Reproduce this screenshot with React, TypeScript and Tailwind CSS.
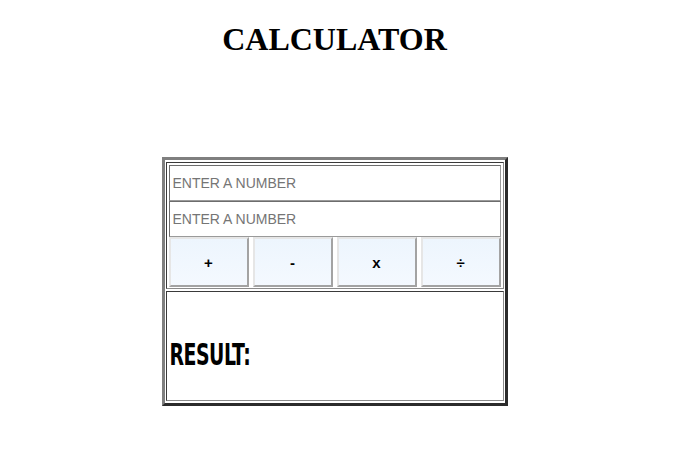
import React, { useState } from 'react';

const ops = ['+', '-', 'x', '÷'];

const App: React.FC = () => {
  const [a, setA] = useState('');
  const [b, setB] = useState('');
  const [result, setResult] = useState<string>('');

  const calc = (op: string) => {
    const x = parseFloat(a);
    const y = parseFloat(b);
    if (isNaN(x) || isNaN(y)) return;
    let r = 0;
    if (op === '+') r = x + y;
    else if (op === '-') r = x - y;
    else if (op === 'x') r = x * y;
    else r = x / y;
    setResult(String(r));
  };

  return (
    <div className="min-h-[475px] w-[669px] bg-white">
      <h1 className="mt-[21px] text-center font-['Liberation_Serif',serif] text-[32px] font-bold leading-[1.15] text-black">
        CALCULATOR
      </h1>

      <div className="mx-auto mt-[99px] flex w-[346px] flex-col gap-[2px] border-[3px] border-t-[#7f7f7f] border-l-[#7f7f7f] border-r-[#2b2b2b] border-b-[#2b2b2b] px-px py-[2px]">
        <div className="border border-t-[#3a3a3a] border-l-[#3a3a3a] border-r-[#8a8a8a] border-b-[#8a8a8a] px-[2px] pt-[2px] pb-px">
          <input
            value={a}
            onChange={(e) => setA(e.target.value)}
            placeholder="ENTER A NUMBER"
            className="block h-[36px] w-full border border-t-[#6d6d6d] border-l-[#6d6d6d] border-r-[#9a9a9a] border-b-[#9a9a9a] px-[3px] font-['Liberation_Sans',sans-serif] text-[14px] text-black outline-none placeholder:text-[#757575]"
          />
          <input
            value={b}
            onChange={(e) => setB(e.target.value)}
            placeholder="ENTER A NUMBER"
            className="block h-[36px] w-full border border-t-[#6d6d6d] border-l-[#6d6d6d] border-r-[#9a9a9a] border-b-[#9a9a9a] px-[3px] font-['Liberation_Sans',sans-serif] text-[14px] text-black outline-none placeholder:text-[#757575]"
          />
          <div className="flex gap-[4px]">
            {ops.map((op) => (
              <button
                key={op}
                onClick={() => calc(op)}
                className="h-[50px] w-[80px] border-2 border-t-[#e6e6e6] border-l-[#e6e6e6] border-r-[#a3a3a3] border-b-[#a3a3a3] bg-gradient-to-b from-[#edf5fd] to-[#f4f9ff] pt-[3px] font-['Liberation_Sans',sans-serif] text-[15px] font-bold text-black"
              >
                {op}
              </button>
            ))}
          </div>
        </div>

        <div className="h-[110px] border border-t-[#3a3a3a] border-l-[#3a3a3a] border-r-[#8a8a8a] border-b-[#8a8a8a] pl-[3px] pt-[52px]">
          <span className="inline-block origin-left scale-y-[1.4] font-['Liberation_Sans_Narrow','DejaVu_Sans_Condensed',sans-serif] text-[21px] leading-none font-bold tracking-[-0.5px] text-black">
            RESULT:{result && ` ${result}`}
          </span>
        </div>
      </div>
    </div>
  );
};

export default App;
